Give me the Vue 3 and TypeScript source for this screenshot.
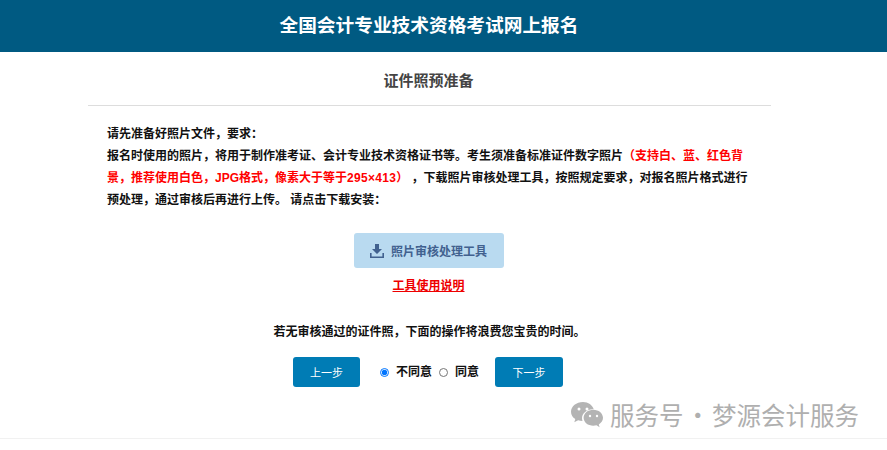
<script setup lang="ts">
import { ref } from 'vue'

const agree = ref('no')
</script>

<template>
  <div class="page">
    <header class="top">全国会计专业技术资格考试网上报名</header>
    <main class="box">
      <h2 class="sub">证件照预准备</h2>
      <div class="intro">
        <p>请先准备好照片文件，要求：</p>
        <p>
          报名时使用的照片，将用于制作准考证、会计专业技术资格证书等。考生须准备标准证件数字照片<span class="red">（支持白、蓝、红色背景，推荐使用白色，JPG格式，像素大于等于<span class="num">295×413</span>）</span> ，下载照片审核处理工具，按照规定要求，对报名照片格式进行预处理，通过审核后再进行上传。 请点击下载安装：
        </p>
      </div>
      <div class="tool-row">
        <button class="tool" type="button">
          <svg width="14" height="14" viewBox="0 0 14 14" aria-hidden="true">
            <path d="M5 0h4v5h3L7 10 2 5h3z" fill="#41618f" />
            <path d="M0 9h1.600v3.400h10.800V9H14v5H0z" fill="#41618f" />
          </svg>
          照片审核处理工具
        </button>
      </div>
      <a class="howto" href="#">工具使用说明</a>
      <p class="warn">若无审核通过的证件照，下面的操作将浪费您宝贵的时间。</p>
      <div class="actions">
        <button class="step" type="button">上一步</button>
        <label class="opt first"><input v-model="agree" type="radio" name="agree" value="no" /><span>不同意</span></label>
        <label class="opt"><input v-model="agree" type="radio" name="agree" value="yes" /><span>同意</span></label>
        <button class="step next" type="button">下一步</button>
      </div>
    </main>
    <div class="foot"></div>
    <div class="mark">
      <svg width="32" height="26" viewBox="0 0 32 26" aria-hidden="true">
        <path d="M12 0C5.400 0 0 4.300 0 9.700c0 3 1.700 5.600 4.300 7.400L3.300 20.300l3.800-2c1.400.5 2.900.7 4.400.7-.3-.9-.5-1.800-.5-2.700 0-5 4.800-9 10.800-9h.9C21.600 3.100 17.200 0 12 0z" fill="#b4b4b4" />
        <path d="M32 15.800c0-4.400-4.300-8-9.700-8s-9.700 3.600-9.700 8 4.300 8 9.700 8c1.100 0 2.200-.2 3.200-.5l3.100 1.900-.8-2.800c2.600-1.400 4.200-3.800 4.200-6.600z" fill="#b4b4b4" />
        <circle cx="8" cy="7" r="1.500" fill="#fff" />
        <circle cx="16" cy="7" r="1.500" fill="#fff" />
        <circle cx="19" cy="14" r="1.200" fill="#fff" />
        <circle cx="26" cy="14" r="1.200" fill="#fff" />
      </svg>
      <span>服务号 · 梦源会计服务</span>
    </div>
  </div>
</template>

<style>
html, body { margin: 0; background: #fff; }
</style>

<style scoped>
.page { position: relative; height: 450px; overflow: hidden; font-family: "Liberation Sans", "Noto Sans CJK SC", sans-serif; color: #111; }
.top { height: 52px; line-height: 52px; padding-right: 29px; background: #005a82; color: #fff; text-align: center; font-size: 18.7px; font-weight: 700; }
.box { width: 683px; margin-left: 88px; }
.sub { margin: 0; height: 53px; line-height: 58px; padding-right: 2px; border-bottom: 1px solid #ddd; text-align: center; font-size: 15px; font-weight: 700; color: #444; }
.intro { margin-top: 17px; padding: 0 21px 0 19px; font-size: 12px; font-weight: 700; line-height: 22px; }
.intro p { margin: 0; }
.red { color: #f00; }
.num { letter-spacing: .3px; }
.tool-row { display: flex; justify-content: center; margin-top: 22px; padding-right: 2px; }
.tool { display: flex; align-items: center; justify-content: center; gap: 7px; width: 150px; height: 35px; border: 0; border-radius: 3px; background: #b9daf0; color: #41618f; font: 700 12px "Liberation Sans", "Noto Sans CJK SC", sans-serif; }
.howto { display: block; width: 72px; margin: 10px auto 0; padding-right: 2px; font-size: 12px; font-weight: 700; line-height: 17px; color: #e00; text-decoration: underline; }
.warn { margin: 28px 0 0; text-align: center; font-size: 12px; font-weight: 700; line-height: 18px; }
.actions { display: flex; align-items: center; width: 270px; margin: 16px 0 0 205px; }
.step { width: 67px; height: 30px; border: 0; border-radius: 3px; background: #007cb5; color: #fff; font: 400 11px "Liberation Sans", "Noto Sans CJK SC", sans-serif; }
.next { width: 68px; margin-left: auto; }
.opt { display: flex; align-items: center; margin-left: 7px; font-size: 12px; font-weight: 700; }
.opt.first { margin-left: 20px; }
.opt span { position: relative; top: -2px; }
.opt input { width: 9px; height: 9px; margin: 0 7px 0 0; }
.foot { position: absolute; left: 0; right: 0; top: 438px; height: 1px; background: #f1f1f1; }
.mark { position: absolute; left: 571px; top: 400px; display: flex; align-items: center; gap: 7px; font-family: "Noto Sans CJK SC", sans-serif; font-size: 24.5px; word-spacing: -3.5px; line-height: 30px; color: #afafaf; white-space: nowrap; }
</style>
